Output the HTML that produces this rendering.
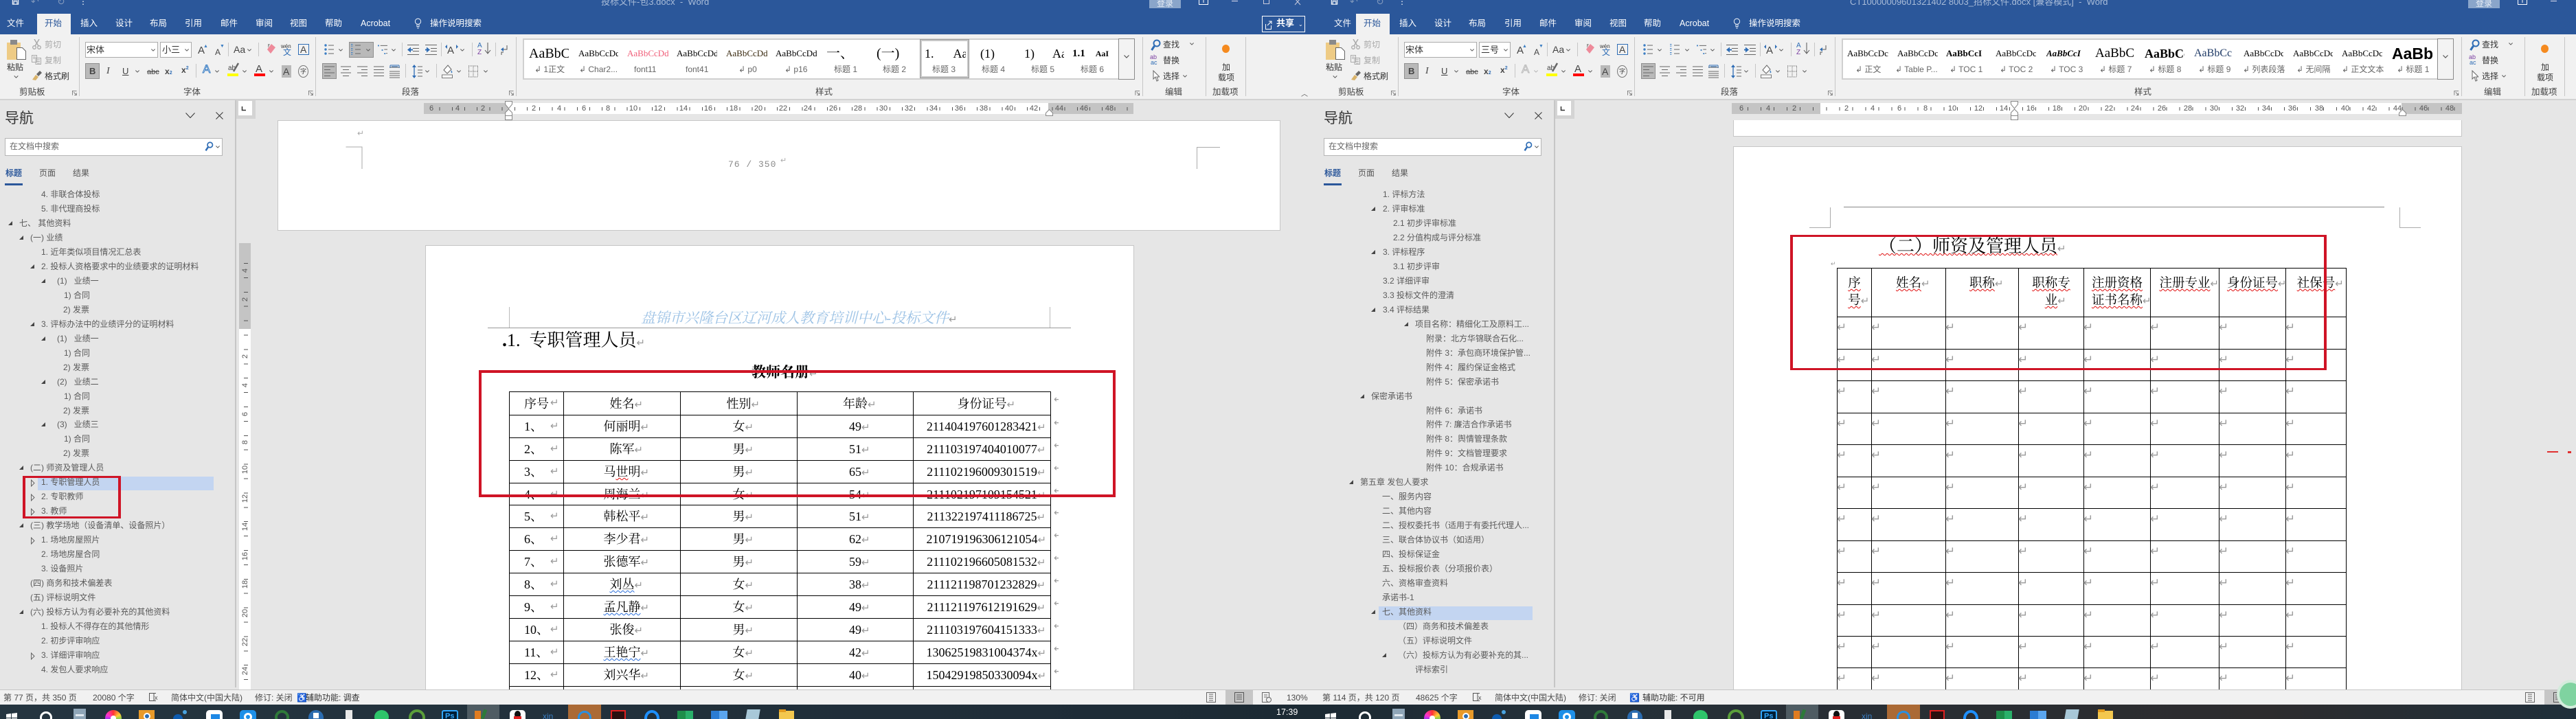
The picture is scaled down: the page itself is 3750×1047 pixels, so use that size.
<!DOCTYPE html>
<html lang="zh-CN"><head><meta charset="utf-8"><title>Word</title>
<style>
*{box-sizing:border-box}
html,body{margin:0;padding:0;width:3750px;height:1047px;overflow:hidden;background:#e6e6e6}
body{position:relative;font:12px/16px "Liberation Sans","Noto Sans CJK SC",sans-serif;color:#444}
i{position:absolute;font-style:normal;white-space:nowrap;line-height:16px}
.a,.s{position:absolute}
.s{overflow:visible}
.w{position:absolute;top:0;width:1920px;height:1047px}
.bar{position:absolute;left:0;width:3750px}
.v{position:absolute;top:54px;height:86px;width:1px;background:#c6c6c6}
.vs{position:absolute;width:1px;background:#c6c6c6}
.tab i{top:26px;color:#fff;font-size:12.5px}
.ttl{top:-5px;color:#a9bcd8;font-size:13px}
.grp{top:126px;color:#444;font-size:12.5px}
.gray{color:#a8a8a8}
.box{position:absolute;background:#fff;border:1px solid #ababab}
.on{position:absolute;background:#b9b9b9;border:1px solid #8f8f8f}
.gal{position:absolute;left:761px;top:56px;width:891px;height:60px;background:#fff;border:2px solid #d0d0d0;border-right:0}
.gb{position:absolute;left:1628px;top:56px;width:24px;height:60px;background:#f3f3f3;border:1px solid #8a8a8a}
.g{position:absolute;top:68px;height:20px;line-height:20px;overflow:hidden;white-space:nowrap;font:13px/20px "Liberation Serif","Noto Serif CJK SC",serif;color:#000}
.l{top:93px;color:#666;font-size:12px}
.rg{position:absolute;top:150px;height:16px;background:#c4c4c4}
.rw{position:absolute;top:150px;height:16px;background:#fff}
.rt{position:absolute;height:5px;top:156px}
.rl i{top:150px;font-size:11px;color:#555;width:16px;margin-left:-8px;text-align:center}
.vl i{left:347px;width:20px;text-align:center;font-size:11px;line-height:12px;height:12px;color:#555;transform:rotate(-90deg)}
.n i{color:#5a5a5a;font-size:12px}
.tf{position:absolute;width:6px;height:6px;background:#444;clip-path:polygon(100% 0,100% 100%,0 100%)}
.st i{top:1008px;color:#4a4a4a;font-size:12px}
.k{position:absolute}
.red{position:absolute;border:4px solid #cf1426;z-index:5}
table{border-collapse:collapse;table-layout:fixed;font:18px/22px "Liberation Serif","Noto Serif CJK SC",serif;color:#000}
td{border:1px solid #000;padding:0;text-align:center}
s{text-decoration:none;color:#9a9a9a;font:15px/13px "DejaVu Sans",sans-serif;display:inline-block;width:0;white-space:nowrap}
u{text-decoration:underline wavy #e01010 1px;text-underline-offset:2px}
u.b{text-decoration-color:#2a6fdb}
.c{position:relative}
.c>s:last-child{position:absolute;left:calc(100% + 5px);top:5px;font-size:14px}
.t1 td:first-child{text-align:left;padding-left:21px;position:relative}
.t1 td:first-child s{position:absolute;left:59px;top:9px}
.t2 td{vertical-align:top;text-align:left;border-color:#000;padding-top:3px}
.t2 s{font-size:17px;line-height:16px;margin-left:-1px}
.t2 tr.h td{font-size:18.5px;line-height:25px;padding-top:10px;text-align:center}
.t2 tr.h s{font-size:15px;margin:0}
</style></head><body>
<svg width="0" height="0" style="position:absolute"><defs>
<symbol id="cv" viewBox="0 0 8 5"><path d="M.5.5 4 4 7.5.5" fill="none" stroke="#555" stroke-width="1.2"/></symbol>
<symbol id="dl" viewBox="0 0 9 9"><path d="M.5 8.5V.5h8M3 3l5 5M8 4v4.500H4" fill="none" stroke="#666"/></symbol>
<symbol id="pa" viewBox="0 0 28 29"><rect y="4" width="20" height="25" fill="#eecb85"/><rect x="5" width="10" height="7" fill="#8a8a8a"/><path d="M14.500 11.500h8l5 5v12h-13z" fill="#fff" stroke="#666"/></symbol>
<symbol id="sc" viewBox="0 0 13 15"><path d="M3 0l6 10M10 0L4 10" stroke="#aaa" stroke-width="1.500" fill="none"/><circle cx="3" cy="12" r="2.300" fill="none" stroke="#aaa" stroke-width="1.300"/><circle cx="10" cy="12" r="2.300" fill="none" stroke="#aaa" stroke-width="1.300"/></symbol>
<symbol id="cp" viewBox="0 0 14 14"><path d="M.5.5h7v10h-7zM6 4.500h7.500v9H6zM2 3h4M2 5h3M8 7h4M8 9.500h4M8 12h4" fill="#f1f1f1" stroke="#aaa"/></symbol>
<symbol id="fp" viewBox="0 0 14 14"><path d="M0 13l5-7 4 3-4 5z" fill="#d9b36a"/><path d="M6 5l5-5 3 3-5 5z" fill="#666"/></symbol>
<symbol id="bl" viewBox="0 0 14 16"><circle cx="2" cy="2" r="1.700" fill="#3d7fc4"/><circle cx="2" cy="8" r="1.700" fill="#3d7fc4"/><circle cx="2" cy="14" r="1.700" fill="#3d7fc4"/><path d="M6 2h8M6 8h8M6 14h8" stroke="#666"/></symbol>
<symbol id="nm" viewBox="0 0 14 16"><path d="M0 .5h2.500M0 3h2.500M0 6.500h2.500M0 9h2.500M0 12.500h2.500M0 15h2.500" stroke="#3d7fc4"/><path d="M6 2h8M6 8h8M6 14h8" stroke="#666"/></symbol>
<symbol id="ml" viewBox="0 0 15 16"><path d="M0 2h2M6 9h2M10 14.500h2" stroke="#3d7fc4" stroke-width="2"/><path d="M4 2h11M10 8h5M13 14h2" stroke="#666"/></symbol>
<symbol id="od" viewBox="0 0 17 15"><path d="M0 .5h17M8 5.500h9M8 9.500h9M0 14.500h17" stroke="#666"/><path d="M0 7.500l5-4v8z" fill="#2f6db5"/><path d="M4 7.500h4" stroke="#2f6db5" stroke-width="2"/></symbol>
<symbol id="id" viewBox="0 0 17 15"><path d="M0 .5h17M8 5.500h9M8 9.500h9M0 14.500h17" stroke="#666"/><path d="M7 7.500l-5-4v8z" fill="#2f6db5"/><path d="M0 7.500h3" stroke="#2f6db5" stroke-width="2"/></symbol>
<symbol id="al" viewBox="0 0 15 16"><path d="M0 1h15M0 5.500h9M0 10h15M0 14.500h9" stroke="#666"/></symbol>
<symbol id="ac" viewBox="0 0 15 16"><path d="M0 1h15M3 5.500h9M0 10h15M3 14.500h9" stroke="#666"/></symbol>
<symbol id="ar" viewBox="0 0 15 16"><path d="M0 1h15M6 5.500h9M0 10h15M6 14.500h9" stroke="#666"/></symbol>
<symbol id="aj" viewBox="0 0 15 16"><path d="M0 1h15M0 5.500h15M0 10h15M0 14.500h15" stroke="#666"/></symbol>
<symbol id="ad" viewBox="0 0 15 20"><path d="M0 4h15M0 10h15M0 13h15M0 16h15M0 19h15" stroke="#666"/><path d="M1 1h13M1 1v4M14 1v4M3 3h9" stroke="#2f6db5"/></symbol>
<symbol id="ls" viewBox="0 0 15 20"><path d="M3 2v16" stroke="#2f6db5" stroke-width="1.300"/><path d="M3 0l3 4H0zM3 20l3-4H0z" fill="#2f6db5"/><path d="M8 3h7M8 8h7M8 12h7M8 17h7" stroke="#666"/></symbol>
<symbol id="shd" viewBox="0 0 17 20"><path d="M3 8l6-7 5 6-6 6z" fill="#fff" stroke="#666"/><path d="M14 8c1 2 2 3 1 4s-2-1-1-4" fill="#3d7fc4"/><rect x=".5" y="15" width="15" height="4.500" fill="#fff" stroke="#777"/></symbol>
<symbol id="bd" viewBox="0 0 14 18"><path d="M.5 1v16M7 1v16M13.500 1v16M0 1h14M0 9h14M0 17h14" stroke="#666" stroke-dasharray="1 1"/></symbol>
<symbol id="ret" viewBox="0 0 11 16"><path d="M9 1v6H3" fill="none" stroke="#555"/><path d="M0 7l4-3v6z" fill="#2f6db5"/><path d="M4 11H1v4" fill="none" stroke="#555"/></symbol>
<symbol id="zoom" viewBox="0 0 15 18"><circle cx="9" cy="6" r="4.500" fill="none" stroke="#2f6db5" stroke-width="2"/><path d="M5.500 10l-4 6" stroke="#2f6db5" stroke-width="3"/></symbol>
<symbol id="ptr" viewBox="0 0 10 17"><path d="M1 1v12l3-3 2 6 2-1-2-5h4z" fill="#fff" stroke="#666"/></symbol>
<symbol id="ht" viewBox="0 0 6 10"><path d="M.5.5 5 5 .5 9.500z" fill="none" stroke="#666"/></symbol>
<symbol id="x" viewBox="0 0 11 11"><path d="M.5.5l10 10M10.500.5l-10 10" stroke="#333" fill="none"/></symbol>
<symbol id="nv" viewBox="0 0 14 8"><path d="M.5.5 7 7.500 13.500.5" stroke="#333" fill="none"/></symbol>
<symbol id="bulb" viewBox="0 0 13 24"><circle cx="6.500" cy="7" r="5.500" fill="none" stroke="#fff" stroke-width="1.200"/><path d="M4.500 12v5h4v-5M5 20h3" stroke="#fff" stroke-width="1.200" fill="none"/></symbol>
<symbol id="sv" viewBox="0 0 13 13"><path d="M.5 -4h12v13h-12zM3 3h7v6H3zM3 -4v4h7v-4" fill="none" stroke="#fff" stroke-width="1.600"/></symbol>
<symbol id="wn" viewBox="0 0 16 16"><path d="M0 2l7-1v6H0zM8 1l8-1v7H8zM0 8h7v6l-7-1zM8 8h8v8l-8-1z" fill="#fff"/></symbol>
</defs></svg>

<!-- chrome bars -->
<div class="bar" style="top:0;height:50px;background:#2b579a"></div>
<div class="bar" style="top:50px;height:94px;background:#f1f1f1"></div>
<div class="bar" style="top:144px;height:2px;background:#d2d2d2"></div>
<div class="bar" style="top:1004px;height:22px;background:#f1f1f1;border-top:1px solid #c6c6c6"></div>
<div class="bar" style="top:1026px;height:21px;background:linear-gradient(90deg,#253540,#1f2d38 40%,#1c2a33 51%,#243039 60%,#2d2c2e 88%,#1f2f3a)"></div>

<!-- LEFT WINDOW -->
<div class="w" style="left:0">
<svg class="s" style="left:16px;top:0" width="13" height="9"><use href="#sv"/></svg>
<i style="left:45px;top:-6px;color:#7f97bc;font-size:14px">↶</i><i style="left:83px;top:-6px;color:#7f97bc;font-size:14px">↻</i><i style="left:115px;top:-6px;color:#fff;font-size:12px">⋮</i>
<i class="ttl" style="left:875px">投标文件-包3.docx&nbsp; -&nbsp; Word</i>
<div class="a" style="left:1673px;top:0;width:46px;height:12px;background:#8aa5ca"></div><i style="left:1684px;top:-3px;color:#e8eef6">登录</i>
<svg class="s" style="left:1745px;top:0" width="14" height="8"><path d="M.5 0v6.500h13V0M7 0v4" fill="none" stroke="#fff"/></svg>
<div class="a" style="left:1793px;top:1px;width:9px;height:1px;background:#dde"></div><div class="a" style="left:1839px;top:0;width:9px;height:6px;border:1px solid #ccd;border-top:0"></div>
<svg class="s" style="left:1885px;top:0" width="9" height="7"><path d="M0 -2l8 9M8 -2l-8 9" stroke="#ccd" fill="none"/></svg>
<div class="a" style="left:1837px;top:23px;width:63px;height:24px;border:1px solid #fff"></div>
<svg class="s" style="left:1842px;top:29px" width="11" height="14"><path d="M.5 6v7.500h8V8M3 8l6-6M5 2h4v4" fill="none" stroke="#fff"/></svg>
<i style="left:1858px;top:26px;color:#fff;font-weight:bold;font-size:13px">共享</i><i style="left:1890px;top:28px;color:#fff;font-size:8px">⌄</i>
<div class="a" style="left:54px;top:20px;width:49px;height:30px;background:#f1f1f1"></div>
<div class="tab">
<i style="left:10px">文件</i><i style="left:65px;color:#2b579a">开始</i><i style="left:117px">插入</i><i style="left:168px">设计</i><i style="left:218px">布局</i><i style="left:269px">引用</i><i style="left:321px">邮件</i><i style="left:372px">审阅</i><i style="left:422px">视图</i><i style="left:473px">帮助</i><i style="left:525px">Acrobat</i><i style="left:626px">操作说明搜索</i></div>
<svg class="s" style="left:602px;top:26px" width="13" height="18"><use href="#bulb"/></svg>
<div class="v" style="left:115px"></div><div class="v" style="left:459px"></div><div class="v" style="left:751px"></div><div class="v" style="left:1663px"></div><div class="v" style="left:1755px"></div><div class="v" style="left:1813px"></div>
<svg class="s" style="left:10px;top:58px" width="28" height="29"><use href="#pa"/></svg>
<i style="left:10px;top:90px;color:#333">粘贴</i><svg class="s" style="left:20px;top:110px" width="7" height="4"><use href="#cv"/></svg>
<svg class="s" style="left:47px;top:57px" width="13" height="15"><use href="#sc"/></svg><i class="gray" style="left:65px;top:57px">剪切</i>
<svg class="s" style="left:46px;top:80px" width="14" height="14"><use href="#cp"/></svg><i class="gray" style="left:65px;top:80px">复制</i>
<svg class="s" style="left:47px;top:103px" width="14" height="14"><use href="#fp"/></svg><i style="left:65px;top:103px;color:#333">格式刷</i>
<i class="grp" style="left:28px">剪贴板</i><svg class="s" style="left:104px;top:132px" width="9" height="7"><use href="#dl"/></svg>
<div class="box" style="left:124px;top:61px;width:106px;height:23px"></div><i style="left:126px;top:65px;color:#333;font-size:13px">宋体</i><svg class="s" style="left:220px;top:71px" width="6" height="4"><use href="#cv"/></svg>
<div class="box" style="left:233px;top:61px;width:46px;height:23px"></div><i style="left:236px;top:65px;color:#333;font-size:13px">小三</i><svg class="s" style="left:269px;top:71px" width="6" height="4"><use href="#cv"/></svg>
<i style="left:288px;top:66px;font-size:15px">A</i><i style="left:296px;top:60px;font-size:7px;color:#3d7fc4">▲</i><i style="left:313px;top:68px;font-size:12px">A</i><i style="left:320px;top:60px;font-size:7px;color:#3d7fc4">▼</i>
<div class="vs" style="left:332px;top:62px;height:20px"></div><i style="left:340px;top:64px;font-size:14px">Aa</i><svg class="s" style="left:360px;top:71px" width="6" height="4"><use href="#cv"/></svg><div class="vs" style="left:376px;top:62px;height:20px"></div>
<svg class="s" style="left:386px;top:63px" width="16" height="17"><path d="M3 9l6-8 6 5-7 9z" fill="#ee8a9a"/><path d="M4 1l3 0-3 6z" fill="#999"/></svg>
<i style="left:409px;top:60px;font-size:8px;color:#333">wén</i><i style="left:412px;top:68px;font-size:12px;color:#2f6db5">文</i>
<div class="a" style="left:434px;top:64px;width:16px;height:16px;border:1px solid #2f6db5"></div><i style="left:437px;top:64px;font-size:14px">A</i>
<div class="on" style="left:124px;top:92px;width:21px;height:23px"></div><i style="left:130px;top:96px;font-weight:bold;font-size:13px">B</i><i style="left:155px;top:96px;font-style:italic;font-family:'Liberation Serif';font-size:14px">I</i><i style="left:178px;top:96px;text-decoration:underline;font-size:13px">U</i><svg class="s" style="left:197px;top:102px" width="6" height="4"><use href="#cv"/></svg>
<i style="left:214px;top:97px;text-decoration:line-through;font-size:11px">abc</i><i style="left:240px;top:96px;font-weight:bold;font-size:12px">x<span style="font-size:7px;color:#2f6db5">2</span></i><i style="left:264px;top:94px;font-weight:bold;font-size:12px">x<sup style="font-size:7px;color:#2f6db5;line-height:0">2</sup></i><div class="vs" style="left:285px;top:93px;height:20px"></div>
<i style="left:295px;top:93px;font-size:17px;color:#fff;-webkit-text-stroke:1px #3d7fc4">A</i><svg class="s" style="left:313px;top:102px" width="6" height="4"><use href="#cv"/></svg>
<i style="left:332px;top:92px;font-size:10px">ab</i><svg class="s" style="left:338px;top:92px" width="10" height="14"><path d="M9 0L2 12" stroke="#666" stroke-width="2.500"/></svg><div class="a" style="left:331px;top:107px;width:16px;height:4px;background:#ffff00"></div><svg class="s" style="left:353px;top:102px" width="6" height="4"><use href="#cv"/></svg>
<i style="left:372px;top:93px;font-size:15px">A</i><div class="a" style="left:370px;top:107px;width:16px;height:4px;background:#f00"></div><svg class="s" style="left:392px;top:102px" width="6" height="4"><use href="#cv"/></svg>
<div class="a" style="left:410px;top:95px;width:14px;height:18px;background:#b9b9b9"></div><i style="left:412px;top:96px;font-size:14px">A</i>
<div class="a" style="left:434px;top:95px;width:15px;height:18px;border:1px solid #777;border-radius:50%"></div><i style="left:437px;top:96px;font-size:9px">字</i>
<i class="grp" style="left:267px">字体</i><svg class="s" style="left:448px;top:132px" width="9" height="7"><use href="#dl"/></svg>
<svg class="s" style="left:472px;top:64px" width="14" height="16"><use href="#bl"/></svg><svg class="s" style="left:493px;top:71px" width="6" height="4"><use href="#cv"/></svg>
<div class="on" style="left:508px;top:61px;width:36px;height:23px"></div><svg class="s" style="left:511px;top:64px" width="14" height="16"><use href="#nm"/></svg><svg class="s" style="left:533px;top:71px" width="6" height="4"><use href="#cv"/></svg>
<svg class="s" style="left:550px;top:64px" width="14" height="16"><use href="#ml"/></svg><svg class="s" style="left:570px;top:71px" width="6" height="4"><use href="#cv"/></svg><div class="vs" style="left:585px;top:62px;height:20px"></div>
<svg class="s" style="left:593px;top:65px" width="17" height="15"><use href="#od"/></svg><svg class="s" style="left:619px;top:65px" width="17" height="15"><use href="#id"/></svg><div class="vs" style="left:642px;top:62px;height:20px"></div>
<i style="left:651px;top:66px;font-size:15px">A</i><svg class="s" style="left:648px;top:64px" width="19" height="7"><path d="M0 4l3-3v6zM19 4l-3-3v6z" fill="#2f6db5"/></svg><svg class="s" style="left:670px;top:71px" width="6" height="4"><use href="#cv"/></svg><div class="vs" style="left:687px;top:62px;height:20px"></div>
<i style="left:695px;top:61px;font-size:10px;color:#2f6db5;line-height:11px">A</i><i style="left:695px;top:71px;font-size:10px;color:#7a3ea0;line-height:11px">Z</i><svg class="s" style="left:704px;top:62px" width="12" height="18"><path d="M6 0v15M2 11l4 5 4-5" stroke="#555" fill="none"/></svg><div class="vs" style="left:721px;top:62px;height:20px"></div>
<svg class="s" style="left:729px;top:65px" width="11" height="16"><use href="#ret"/></svg>
<div class="on" style="left:469px;top:92px;width:21px;height:23px"></div><svg class="s" style="left:472px;top:96px" width="15" height="16"><use href="#al"/></svg><svg class="s" style="left:496px;top:96px" width="15" height="16"><use href="#ac"/></svg><svg class="s" style="left:520px;top:96px" width="15" height="16"><use href="#ar"/></svg><svg class="s" style="left:544px;top:96px" width="15" height="16"><use href="#aj"/></svg><svg class="s" style="left:567px;top:94px" width="15" height="20"><use href="#ad"/></svg><div class="vs" style="left:590px;top:93px;height:20px"></div>
<svg class="s" style="left:600px;top:94px" width="15" height="20"><use href="#ls"/></svg><svg class="s" style="left:619px;top:102px" width="6" height="4"><use href="#cv"/></svg><div class="vs" style="left:635px;top:93px;height:20px"></div>
<svg class="s" style="left:643px;top:94px" width="17" height="20"><use href="#shd"/></svg><svg class="s" style="left:665px;top:102px" width="6" height="4"><use href="#cv"/></svg><svg class="s" style="left:682px;top:95px" width="14" height="18"><use href="#bd"/></svg><svg class="s" style="left:704px;top:102px" width="6" height="4"><use href="#cv"/></svg>
<i class="grp" style="left:585px">段落</i><svg class="s" style="left:740px;top:132px" width="9" height="7"><use href="#dl"/></svg>
<div class="gal"></div><div class="gb"></div><svg class="s" style="left:1636px;top:80px" width="8" height="5"><use href="#cv"/></svg>
<div class="a" style="left:1339px;top:57px;width:72px;height:57px;border:3px solid #c8c8c8;outline:1px solid #999;outline-offset:-1px;background:#fff"></div>
<div class="g" style="left:770px;width:58px;font-size:20px;top:64px;height:28px;line-height:28px">AaBbC</div>
<div class="g" style="left:842px;width:58px">AaBbCcDdI</div>
<div class="g" style="left:913px;width:60px;color:#f0607a">AaBbCcDdI</div>
<div class="g" style="left:985px;width:59px">AaBbCcDdI</div>
<div class="g" style="left:1057px;width:60px;color:#3a2a10">AaBbCcDd</div>
<div class="g" style="left:1129px;width:60px">AaBbCcDd</div>
<div class="g" style="left:1203px;width:34px;font-size:20px;top:64px;height:28px;line-height:28px">一、</div>
<div class="g" style="left:1276px;width:42px;font-size:20px;top:64px;height:28px;line-height:28px">(一)</div>
<div class="g" style="left:1346px;width:60px;font-size:18px;top:64px;height:28px;line-height:28px">1.<span style="margin-left:28px">Aa</span></div>
<div class="g" style="left:1427px;width:34px;font-size:18px;top:64px;height:28px;line-height:28px">(1)</div>
<div class="g" style="left:1491px;width:58px;font-size:18px;top:64px;height:28px;line-height:28px">1)<span style="margin-left:26px">Aa</span></div>
<div class="g" style="left:1561px;width:59px;font-size:15px;font-weight:bold;top:64px;height:28px;line-height:28px">1.1<span style="margin-left:15px;font-size:12px">AaI</span></div>
<i class="l" style="left:778px">↲ 1正文</i><i class="l" style="left:843px">↲ Char2...</i><i class="l" style="left:923px">font11</i><i class="l" style="left:998px">font41</i><i class="l" style="left:1075px">↲ p0</i><i class="l" style="left:1142px">↲ p16</i><i class="l" style="left:1214px">标题 1</i><i class="l" style="left:1285px">标题 2</i><i class="l" style="left:1357px">标题 3</i><i class="l" style="left:1429px">标题 4</i><i class="l" style="left:1501px">标题 5</i><i class="l" style="left:1573px">标题 6</i>
<i class="grp" style="left:1187px">样式</i><svg class="s" style="left:1652px;top:132px" width="8" height="7"><use href="#dl"/></svg>
<svg class="s" style="left:1675px;top:57px" width="15" height="18"><use href="#zoom"/></svg><i style="left:1693px;top:57px;color:#333">查找</i><svg class="s" style="left:1732px;top:62px" width="6" height="4"><use href="#cv"/></svg>
<i style="left:1674px;top:79px;font-size:9px;line-height:9px;color:#7a3ea0">ab</i><i style="left:1675px;top:87px;font-size:9px;line-height:9px;color:#2f6db5">ac</i><i style="left:1693px;top:80px;color:#333">替换</i>
<svg class="s" style="left:1678px;top:102px" width="10" height="17"><use href="#ptr"/></svg><i style="left:1693px;top:103px;color:#333">选择</i><svg class="s" style="left:1722px;top:109px" width="6" height="4"><use href="#cv"/></svg>
<i class="grp" style="left:1696px">编辑</i>
<div class="a" style="left:1779px;top:65px;width:11px;height:12px;border-radius:50%;background:#f58a1f"></div><i style="left:1779px;top:90px;color:#333">加</i><i style="left:1773px;top:105px;color:#333">载项</i><i class="grp" style="left:1765px">加载项</i>
<i style="left:1894px;top:130px;font-size:10px;color:#555">︿</i>

<!-- rulers -->
<div class="a" style="left:344px;top:146px;width:28px;height:27px;background:#d4d4d4"></div><div class="a" style="left:347px;top:147px;width:20px;height:21px;background:#fff"></div><svg class="s" style="left:352px;top:155px" width="6" height="6"><path d="M.5 0v5.500H6" fill="none" stroke="#333" stroke-width="1.500"/></svg>
<div class="rg" style="left:617px;width:123px"></div><div class="rw" style="left:740px;width:786px"></div><div class="rg" style="left:1526px;width:124px"></div>
<div class="rt" style="left:631.400px;width:1019px;background:repeating-linear-gradient(90deg,transparent 0 8.600px,#555 8.600px 9.600px,transparent 9.600px 26.800px,#555 26.800px 27.800px,transparent 27.800px 36.400px)"></div>
<div class="rl"><i style="left:628px">6</i><i style="left:666px">4</i><i style="left:703px">2</i><i style="left:777px">2</i><i style="left:814px">4</i><i style="left:850px">6</i><i style="left:885px">8</i><i style="left:922px">10</i><i style="left:958px">12</i><i style="left:995px">14</i><i style="left:1031px">16</i><i style="left:1068px">18</i><i style="left:1104px">20</i><i style="left:1140px">22</i><i style="left:1176px">24</i><i style="left:1213px">26</i><i style="left:1249px">28</i><i style="left:1286px">30</i><i style="left:1323px">32</i><i style="left:1359px">34</i><i style="left:1396px">36</i><i style="left:1432px">38</i><i style="left:1469px">40</i><i style="left:1505px">42</i><i style="left:1542px">44</i><i style="left:1578px">46</i><i style="left:1615px">48</i></div>
<svg class="s" style="left:735px;top:147px" width="11" height="28"><path d="M.5.5h10V5L5.500 11 .5 5zM.5 21.500V17L5.500 12l5 5v4.500zM.5 21.500h10v6H.5z" fill="#fff" stroke="#888"/></svg>
<svg class="s" style="left:1522px;top:159px" width="11" height="10"><path d="M5.500.5l5 5v4H.5v-4z" fill="#fff" stroke="#888"/></svg>
<div class="rg" style="left:348px;top:354px;width:17px;height:125px"></div><div class="rw" style="left:348px;top:479px;width:17px;height:525px"></div>
<div class="a" style="left:355px;top:383px;width:6px;height:617px;background:repeating-linear-gradient(180deg,#555 0 1px,transparent 1px 20.900px)"></div>
<div class="vl"><i style="top:388px">4</i><i style="top:430px">2</i><i style="top:513px">2</i><i style="top:555px">4</i><i style="top:597px">6</i><i style="top:638px">8</i><i style="top:678px">10</i><i style="top:720px">12</i><i style="top:761px">14</i><i style="top:804px">16</i><i style="top:845px">18</i><i style="top:887px">20</i><i style="top:929px">22</i><i style="top:971px">24</i></div>

<!-- nav -->
<div class="a" style="left:342px;top:146px;width:2px;height:855px;background:#c6c6c6"></div>
<i style="left:7px;top:160px;font-size:21px;line-height:26px;color:#333">导航</i>
<svg class="s" style="left:270px;top:164px" width="14" height="8"><use href="#nv"/></svg><svg class="s" style="left:314px;top:163px" width="11" height="11"><use href="#x"/></svg>
<div class="box" style="left:7px;top:201px;width:317px;height:26px;border-color:#b5b5b5"></div><i style="left:14px;top:205px;color:#666">在文档中搜索</i>
<svg class="s" style="left:297px;top:206px" width="15" height="15"><use href="#zoom"/></svg><svg class="s" style="left:314px;top:212px" width="6" height="4"><use href="#cv"/></svg>
<i style="left:8px;top:244px;color:#2b579a;font-weight:bold">标题</i><i style="left:57px;top:244px;color:#555">页面</i><i style="left:106px;top:244px;color:#555">结果</i><div class="a" style="left:7px;top:267px;width:26px;height:3px;background:#2b579a"></div>
<div class="a" style="left:55px;top:694px;width:256px;height:20px;background:#c3d5f1"></div>
<div class="n">
<i style="left:60px;top:275px">4. 非联合体投标</i><i style="left:60px;top:296px">5. 非代理商投标</i>
<b class="tf" style="left:12px;top:322px"></b><i style="left:28px;top:317px">七、&nbsp;其他资料</i>
<b class="tf" style="left:28px;top:343px"></b><i style="left:44px;top:338px">(一) 业绩</i>
<i style="left:60px;top:359px">1. 近年类似项目情况汇总表</i>
<b class="tf" style="left:44px;top:385px"></b><i style="left:60px;top:380px">2. 投标人资格要求中的业绩要求的证明材料</i>
<b class="tf" style="left:60px;top:406px"></b><i style="left:83px;top:401px">(1)&nbsp;&nbsp; 业绩一</i>
<i style="left:93px;top:422px">1) 合同</i><i style="left:92px;top:443px">2) 发票</i>
<b class="tf" style="left:44px;top:469px"></b><i style="left:60px;top:464px">3. 评标办法中的业绩评分的证明材料</i>
<b class="tf" style="left:60px;top:490px"></b><i style="left:83px;top:485px">(1)&nbsp;&nbsp; 业绩一</i>
<i style="left:93px;top:506px">1) 合同</i><i style="left:92px;top:527px">2) 发票</i>
<b class="tf" style="left:60px;top:553px"></b><i style="left:83px;top:548px">(2)&nbsp;&nbsp; 业绩二</i>
<i style="left:93px;top:569px">1) 合同</i><i style="left:92px;top:590px">2) 发票</i>
<b class="tf" style="left:60px;top:615px"></b><i style="left:83px;top:610px">(3)&nbsp;&nbsp; 业绩三</i>
<i style="left:93px;top:631px">1) 合同</i><i style="left:92px;top:652px">2) 发票</i>
<b class="tf" style="left:28px;top:678px"></b><i style="left:44px;top:673px">(二) 师资及管理人员</i>
<svg class="s" style="left:45px;top:698px" width="6" height="11"><use href="#ht"/></svg><i style="left:60px;top:694px">1. 专职管理人员</i>
<svg class="s" style="left:45px;top:719px" width="6" height="11"><use href="#ht"/></svg><i style="left:60px;top:715px">2. 专职教师</i>
<svg class="s" style="left:45px;top:740px" width="6" height="11"><use href="#ht"/></svg><i style="left:60px;top:736px">3. 教师</i>
<b class="tf" style="left:28px;top:762px"></b><i style="left:44px;top:757px">(三) 教学场地（设备清单、设备照片）</i>
<svg class="s" style="left:45px;top:782px" width="6" height="11"><use href="#ht"/></svg><i style="left:60px;top:778px">1. 场地房屋照片</i>
<i style="left:60px;top:799px">2. 场地房屋合同</i><i style="left:60px;top:820px">3. 设备照片</i>
<i style="left:44px;top:841px">(四) 商务和技术偏差表</i><i style="left:44px;top:862px">(五) 评标说明文件</i>
<b class="tf" style="left:28px;top:888px"></b><i style="left:44px;top:883px">(六) 投标方认为有必要补充的其他资料</i>
<i style="left:60px;top:904px">1. 投标人不得存在的其他情形</i><i style="left:60px;top:925px">2. 初步评审响应</i>
<svg class="s" style="left:45px;top:950px" width="6" height="11"><use href="#ht"/></svg><i style="left:60px;top:946px">3. 详细评审响应</i>
<i style="left:60px;top:967px">4. 发包人要求响应</i>
</div>
<div class="red" style="left:33px;top:693px;width:143px;height:62px;border-width:3px 4px"></div>

<!-- pages -->
<div class="a" style="left:404px;top:175px;width:1460px;height:161px;background:#fff;border:1px solid #c6c6c6"></div>
<i style="left:1060px;top:232px;color:#8a8a8a;font-size:13px;letter-spacing:1px;font-family:'Liberation Mono',monospace">76 / 350</i><i style="left:1136px;top:226px;color:#aaa;font-size:11px">↵</i>
<i style="left:520px;top:186px;color:#aaa;font-size:12px">↵</i>
<svg class="s" style="left:503px;top:214px" width="24" height="32"><path d="M.5 0H24V32" fill="none" stroke="#aaa"/></svg>
<svg class="s" style="left:1742px;top:214px" width="34" height="32"><path d="M.5 32V.5H34" fill="none" stroke="#aaa"/></svg>
<div class="a" style="left:619px;top:357px;width:1032px;height:647px;background:#fff;border-left:1px solid #c6c6c6;border-top:1px solid #c6c6c6;border-right:1px solid #c6c6c6"></div>
<div class="a" style="left:741px;top:447px;width:1px;height:30px;background:#bbb"></div><div class="a" style="left:1528px;top:447px;width:1px;height:30px;background:#bbb"></div><div class="a" style="left:710px;top:477px;width:849px;height:1px;background:#999"></div>
<i style="left:933px;top:451px;font:italic 21px/24px 'Liberation Serif','Noto Serif CJK SC',serif;color:#9cc2e5">盘锦市兴隆台区辽河成人教育培训中心-投标文件<s style="font-style:normal">↵</s></i>
<i style="left:731px;top:480px;font:26px/32px 'Liberation Serif','Noto Serif CJK SC',serif;color:#000"><b style="font-size:28px">.</b>1.&nbsp; 专职管理人员<s>↵</s></i>
<i style="left:1094px;top:530px;font:bold 21px/24px 'Liberation Serif','Noto Serif CJK SC',serif;color:#000">教师名册<s>↵</s></i>
<div class="a" style="left:741px;top:570px;width:800px;height:434px;overflow:hidden">
<table class="t1" style="width:788px"><colgroup><col style="width:79px"><col style="width:170px"><col style="width:170px"><col style="width:169px"><col style="width:200px"></colgroup>
<tr style="height:34px"><td>序号<s>↵</s><td>姓名<s>↵</s><td>性别<s>↵</s><td>年龄<s>↵</s><td class="c">身份证号<s>↵</s><s>↵</s>
<tr style="height:33px"><td>1、<s>↵</s><td>何丽明<s>↵</s><td>女<s>↵</s><td>49<s>↵</s><td class="c">211404197601283421<s>↵</s><s>↵</s>
<tr style="height:33px"><td>2、<s>↵</s><td>陈军<s>↵</s><td>男<s>↵</s><td>51<s>↵</s><td class="c">211103197404010077<s>↵</s><s>↵</s>
<tr style="height:33px"><td>3、<s>↵</s><td>马<u>世</u>明<s>↵</s><td>男<s>↵</s><td>65<s>↵</s><td class="c">211102196009301519<s>↵</s><s>↵</s>
<tr style="height:32px"><td>4、<s>↵</s><td>周海兰<s>↵</s><td>女<s>↵</s><td>54<s>↵</s><td class="c">211102197109154521<s>↵</s><s>↵</s>
<tr style="height:33px"><td>5、<s>↵</s><td>韩松平<s>↵</s><td>男<s>↵</s><td>51<s>↵</s><td class="c">211322197411186725<s>↵</s><s>↵</s>
<tr style="height:33px"><td>6、<s>↵</s><td>李少君<s>↵</s><td>男<s>↵</s><td>62<s>↵</s><td class="c">210719196306121054<s>↵</s><s>↵</s>
<tr style="height:33px"><td>7、<s>↵</s><td>张德军<s>↵</s><td>男<s>↵</s><td>59<s>↵</s><td class="c">211102196605081532<s>↵</s><s>↵</s>
<tr style="height:33px"><td>8、<s>↵</s><td><u class="b">刘丛</u><s>↵</s><td>女<s>↵</s><td>38<s>↵</s><td class="c">211121198701232829<s>↵</s><s>↵</s>
<tr style="height:33px"><td>9、<s>↵</s><td><u class="b">孟凡静</u><s>↵</s><td>女<s>↵</s><td>49<s>↵</s><td class="c">211121197612191629<s>↵</s><s>↵</s>
<tr style="height:33px"><td>10、<s>↵</s><td>张俊<s>↵</s><td>男<s>↵</s><td>49<s>↵</s><td class="c">211103197604151333<s>↵</s><s>↵</s>
<tr style="height:33px"><td>11、<s>↵</s><td><u class="b">王艳宁</u><s>↵</s><td>女<s>↵</s><td>42<s>↵</s><td class="c">13062519831004374x<s>↵</s><s>↵</s>
<tr style="height:33px"><td>12、<s>↵</s><td>刘兴华<s>↵</s><td>女<s>↵</s><td>40<s>↵</s><td class="c">15042919850330094x<s>↵</s><s>↵</s>
<tr style="height:33px"><td><td><td><td><td>
</table></div>
<div class="red" style="left:697px;top:539px;width:927px;height:185px;border-width:4px"></div>

<!-- status -->
<div class="st"><i style="left:5px">第 77 页，共 350 页</i><i style="left:135px">20080 个字</i><svg class="s" style="left:217px;top:1009px" width="15" height="13"><path d="M.5.500H7v11H.5zM7 .5h3M7 11.500h3" fill="none" stroke="#555"/></svg><i style="left:225px;top:1008px;font-size:9px">x</i><i style="left:249px">简体中文(中国大陆)</i><i style="left:371px">修订: 关闭</i><i style="left:432px;color:#555">♿</i><i style="left:445px;color:#333">辅助功能: 调查</i>
<svg class="s" style="left:1756px;top:1008px" width="14" height="15"><path d="M.5.500h13v14H.5zM4 3h6M4 6h6M4 9h6M4 12h6" fill="none" stroke="#666"/></svg>
<div class="a" style="left:1784px;top:1005px;width:40px;height:21px;background:#c6c6c6"></div>
<svg class="s" style="left:1797px;top:1008px" width="14" height="15"><path d="M.5.500h13v14H.5zM3 4h8M3 7h8M3 10h8" fill="none" stroke="#555"/></svg>
<svg class="s" style="left:1837px;top:1008px" width="14" height="15"><path d="M.5.500h10v14H.5zM3 4h5M3 7h5" fill="none" stroke="#666"/><circle cx="10" cy="11" r="3.500" fill="#eee" stroke="#666"/></svg>
<i style="left:1873px">130%</i></div>
</div>

<!-- RIGHT WINDOW -->
<div class="w" style="left:1920px">
<svg class="s" style="left:16px;top:0" width="13" height="9"><use href="#sv"/></svg>
<i style="left:45px;top:-6px;color:#7f97bc;font-size:14px">↶</i><i style="left:83px;top:-6px;color:#7f97bc;font-size:14px">↻</i><i style="left:115px;top:-6px;color:#fff;font-size:12px">⋮</i>
<i class="ttl" style="left:773px">CT10000009601321402 8003_招标文件.docx [兼容模式]&nbsp; -&nbsp; Word</i>
<div class="a" style="left:1673px;top:0;width:46px;height:12px;background:#8aa5ca"></div><i style="left:1684px;top:-3px;color:#e8eef6">登录</i>
<svg class="s" style="left:1745px;top:0" width="14" height="8"><path d="M.5 0v6.500h13V0M7 0v4" fill="none" stroke="#fff"/></svg>
<div class="a" style="left:1793px;top:1px;width:9px;height:1px;background:#dde"></div>
<div class="a" style="left:54px;top:20px;width:49px;height:30px;background:#f1f1f1"></div>
<div class="tab">
<i style="left:22px">文件</i><i style="left:65px;color:#2b579a">开始</i><i style="left:117px">插入</i><i style="left:168px">设计</i><i style="left:218px">布局</i><i style="left:270px">引用</i><i style="left:321px">邮件</i><i style="left:372px">审阅</i><i style="left:423px">视图</i><i style="left:473px">帮助</i><i style="left:525px">Acrobat</i><i style="left:626px">操作说明搜索</i></div>
<svg class="s" style="left:602px;top:26px" width="13" height="18"><use href="#bulb"/></svg>
<div class="v" style="left:115px"></div><div class="v" style="left:459px"></div><div class="v" style="left:751px"></div><div class="v" style="left:1663px"></div><div class="v" style="left:1755px"></div><div class="v" style="left:1813px"></div>
<svg class="s" style="left:10px;top:58px" width="28" height="29"><use href="#pa"/></svg>
<i style="left:10px;top:90px;color:#333">粘贴</i><svg class="s" style="left:20px;top:110px" width="7" height="4"><use href="#cv"/></svg>
<svg class="s" style="left:47px;top:57px" width="13" height="15"><use href="#sc"/></svg><i class="gray" style="left:65px;top:57px">剪切</i>
<svg class="s" style="left:46px;top:80px" width="14" height="14"><use href="#cp"/></svg><i class="gray" style="left:65px;top:80px">复制</i>
<svg class="s" style="left:47px;top:103px" width="14" height="14"><use href="#fp"/></svg><i style="left:65px;top:103px;color:#333">格式刷</i>
<i class="grp" style="left:28px">剪贴板</i><svg class="s" style="left:104px;top:132px" width="9" height="7"><use href="#dl"/></svg>
<div class="box" style="left:124px;top:61px;width:106px;height:23px"></div><i style="left:126px;top:65px;color:#333;font-size:13px">宋体</i><svg class="s" style="left:220px;top:71px" width="6" height="4"><use href="#cv"/></svg>
<div class="box" style="left:233px;top:61px;width:46px;height:23px"></div><i style="left:236px;top:65px;color:#333;font-size:13px">三号</i><svg class="s" style="left:269px;top:71px" width="6" height="4"><use href="#cv"/></svg>
<i style="left:288px;top:66px;font-size:15px">A</i><i style="left:296px;top:60px;font-size:7px;color:#3d7fc4">▲</i><i style="left:313px;top:68px;font-size:12px">A</i><i style="left:320px;top:60px;font-size:7px;color:#3d7fc4">▼</i>
<div class="vs" style="left:332px;top:62px;height:20px"></div><i style="left:340px;top:64px;font-size:14px">Aa</i><svg class="s" style="left:360px;top:71px" width="6" height="4"><use href="#cv"/></svg><div class="vs" style="left:376px;top:62px;height:20px"></div>
<svg class="s" style="left:386px;top:63px" width="16" height="17"><path d="M3 9l6-8 6 5-7 9z" fill="#ee8a9a"/><path d="M4 1l3 0-3 6z" fill="#999"/></svg>
<i style="left:409px;top:60px;font-size:8px;color:#333">wén</i><i style="left:412px;top:68px;font-size:12px;color:#2f6db5">文</i>
<div class="a" style="left:434px;top:64px;width:16px;height:16px;border:1px solid #2f6db5"></div><i style="left:437px;top:64px;font-size:14px">A</i>
<div class="on" style="left:124px;top:92px;width:21px;height:23px"></div><i style="left:130px;top:96px;font-weight:bold;font-size:13px">B</i><i style="left:155px;top:96px;font-style:italic;font-family:'Liberation Serif';font-size:14px">I</i><i style="left:178px;top:96px;text-decoration:underline;font-size:13px">U</i><svg class="s" style="left:197px;top:102px" width="6" height="4"><use href="#cv"/></svg>
<i style="left:214px;top:97px;text-decoration:line-through;font-size:11px">abc</i><i style="left:240px;top:96px;font-weight:bold;font-size:12px">x<span style="font-size:7px;color:#2f6db5">2</span></i><i style="left:264px;top:94px;font-weight:bold;font-size:12px">x<sup style="font-size:7px;color:#2f6db5;line-height:0">2</sup></i><div class="vs" style="left:285px;top:93px;height:20px"></div>
<i style="left:295px;top:93px;font-size:17px;color:#eee;-webkit-text-stroke:1px #bbb">A</i><svg class="s" style="left:313px;top:102px;opacity:.4" width="6" height="4"><use href="#cv"/></svg>
<i style="left:332px;top:92px;font-size:10px">ab</i><svg class="s" style="left:338px;top:92px" width="10" height="14"><path d="M9 0L2 12" stroke="#666" stroke-width="2.500"/></svg><div class="a" style="left:331px;top:107px;width:16px;height:4px;background:#ffff00"></div><svg class="s" style="left:353px;top:102px" width="6" height="4"><use href="#cv"/></svg>
<i style="left:372px;top:93px;font-size:15px">A</i><div class="a" style="left:370px;top:107px;width:16px;height:4px;background:#f00"></div><svg class="s" style="left:392px;top:102px" width="6" height="4"><use href="#cv"/></svg>
<div class="a" style="left:410px;top:95px;width:14px;height:18px;background:#b9b9b9"></div><i style="left:412px;top:96px;font-size:14px">A</i>
<div class="a" style="left:434px;top:95px;width:15px;height:18px;border:1px solid #777;border-radius:50%"></div><i style="left:437px;top:96px;font-size:9px">字</i>
<i class="grp" style="left:267px">字体</i><svg class="s" style="left:448px;top:132px" width="9" height="7"><use href="#dl"/></svg>
<svg class="s" style="left:472px;top:64px" width="14" height="16"><use href="#bl"/></svg><svg class="s" style="left:493px;top:71px" width="6" height="4"><use href="#cv"/></svg>
<svg class="s" style="left:511px;top:64px" width="14" height="16"><use href="#nm"/></svg><svg class="s" style="left:533px;top:71px" width="6" height="4"><use href="#cv"/></svg>
<svg class="s" style="left:550px;top:64px" width="14" height="16"><use href="#ml"/></svg><svg class="s" style="left:570px;top:71px" width="6" height="4"><use href="#cv"/></svg><div class="vs" style="left:585px;top:62px;height:20px"></div>
<svg class="s" style="left:593px;top:65px" width="17" height="15"><use href="#od"/></svg><svg class="s" style="left:619px;top:65px" width="17" height="15"><use href="#id"/></svg><div class="vs" style="left:642px;top:62px;height:20px"></div>
<i style="left:651px;top:66px;font-size:15px">A</i><svg class="s" style="left:648px;top:64px" width="19" height="7"><path d="M0 4l3-3v6zM19 4l-3-3v6z" fill="#2f6db5"/></svg><svg class="s" style="left:670px;top:71px" width="6" height="4"><use href="#cv"/></svg><div class="vs" style="left:687px;top:62px;height:20px"></div>
<i style="left:695px;top:61px;font-size:10px;color:#2f6db5;line-height:11px">A</i><i style="left:695px;top:71px;font-size:10px;color:#7a3ea0;line-height:11px">Z</i><svg class="s" style="left:704px;top:62px" width="12" height="18"><path d="M6 0v15M2 11l4 5 4-5" stroke="#555" fill="none"/></svg><div class="vs" style="left:721px;top:62px;height:20px"></div>
<svg class="s" style="left:729px;top:65px" width="11" height="16"><use href="#ret"/></svg>
<div class="on" style="left:469px;top:92px;width:21px;height:23px"></div><svg class="s" style="left:472px;top:96px" width="15" height="16"><use href="#al"/></svg><svg class="s" style="left:496px;top:96px" width="15" height="16"><use href="#ac"/></svg><svg class="s" style="left:520px;top:96px" width="15" height="16"><use href="#ar"/></svg><svg class="s" style="left:544px;top:96px" width="15" height="16"><use href="#aj"/></svg><svg class="s" style="left:567px;top:94px" width="15" height="20"><use href="#ad"/></svg><div class="vs" style="left:590px;top:93px;height:20px"></div>
<svg class="s" style="left:600px;top:94px" width="15" height="20"><use href="#ls"/></svg><svg class="s" style="left:619px;top:102px" width="6" height="4"><use href="#cv"/></svg><div class="vs" style="left:635px;top:93px;height:20px"></div>
<svg class="s" style="left:643px;top:94px" width="17" height="20"><use href="#shd"/></svg><svg class="s" style="left:665px;top:102px" width="6" height="4"><use href="#cv"/></svg><svg class="s" style="left:682px;top:95px" width="14" height="18"><use href="#bd"/></svg><svg class="s" style="left:704px;top:102px" width="6" height="4"><use href="#cv"/></svg>
<i class="grp" style="left:585px">段落</i><svg class="s" style="left:740px;top:132px" width="9" height="7"><use href="#dl"/></svg>
<div class="gal"></div><div class="gb"></div><svg class="s" style="left:1636px;top:80px" width="8" height="5"><use href="#cv"/></svg>
<div class="g" style="left:769px;width:60px">AaBbCcDc</div>
<div class="g" style="left:842px;width:59px">AaBbCcDc</div>
<div class="g" style="left:913px;width:60px;font-weight:bold">AaBbCcI</div>
<div class="g" style="left:985px;width:59px">AaBbCcDc</div>
<div class="g" style="left:1059px;width:58px;font-weight:bold;font-style:italic">AaBbCcI</div>
<div class="g" style="left:1130px;width:58px;font-size:19px;top:64px;height:28px;line-height:28px">AaBbC</div>
<div class="g" style="left:1202px;width:58px;font-size:18px;font-weight:bold;top:64px;height:28px;line-height:28px">AaBbCc</div>
<div class="g" style="left:1274px;width:58px;font-size:16px;top:64px;height:28px;line-height:28px;color:#1f3a66">AaBbCc</div>
<div class="g" style="left:1346px;width:58px">AaBbCcDc</div>
<div class="g" style="left:1418px;width:58px">AaBbCcDc</div>
<div class="g" style="left:1489px;width:59px">AaBbCcDc</div>
<div class="g" style="left:1562px;width:59px;font:bold 23px/28px 'Liberation Sans',sans-serif;top:64px;height:28px">AaBb</div>
<i class="l" style="left:781px">↲ 正文</i><i class="l" style="left:839px">↲ Table P...</i><i class="l" style="left:918px">↲ TOC 1</i><i class="l" style="left:991px">↲ TOC 2</i><i class="l" style="left:1064px">↲ TOC 3</i><i class="l" style="left:1136px">↲ 标题 7</i><i class="l" style="left:1208px">↲ 标题 8</i><i class="l" style="left:1280px">↲ 标题 9</i><i class="l" style="left:1345px">↲ 列表段落</i><i class="l" style="left:1423px">↲ 无间隔</i><i class="l" style="left:1489px">↲ 正文文本</i><i class="l" style="left:1569px">↲ 标题 1</i>
<i class="grp" style="left:1187px">样式</i><svg class="s" style="left:1652px;top:132px" width="8" height="7"><use href="#dl"/></svg>
<svg class="s" style="left:1675px;top:57px" width="15" height="18"><use href="#zoom"/></svg><i style="left:1693px;top:57px;color:#333">查找</i><svg class="s" style="left:1732px;top:62px" width="6" height="4"><use href="#cv"/></svg>
<i style="left:1674px;top:79px;font-size:9px;line-height:9px;color:#7a3ea0">ab</i><i style="left:1675px;top:87px;font-size:9px;line-height:9px;color:#2f6db5">ac</i><i style="left:1693px;top:80px;color:#333">替换</i>
<svg class="s" style="left:1678px;top:102px" width="10" height="17"><use href="#ptr"/></svg><i style="left:1693px;top:103px;color:#333">选择</i><svg class="s" style="left:1722px;top:109px" width="6" height="4"><use href="#cv"/></svg>
<i class="grp" style="left:1696px">编辑</i>
<div class="a" style="left:1779px;top:65px;width:11px;height:12px;border-radius:50%;background:#f58a1f"></div><i style="left:1779px;top:90px;color:#333">加</i><i style="left:1773px;top:105px;color:#333">载项</i><i class="grp" style="left:1765px">加载项</i>

<!-- rulers -->
<div class="a" style="left:344px;top:146px;width:28px;height:27px;background:#d4d4d4"></div><div class="a" style="left:347px;top:147px;width:20px;height:21px;background:#fff"></div><svg class="s" style="left:352px;top:155px" width="6" height="6"><path d="M.5 0v5.500H6" fill="none" stroke="#333" stroke-width="1.500"/></svg>
<div class="rg" style="left:601px;width:129px"></div><div class="rw" style="left:730px;width:846px"></div><div class="rg" style="left:1576px;width:88px"></div>
<div class="rt" style="left:615px;width:1049px;background:repeating-linear-gradient(90deg,transparent 0 9px,#555 9px 10px,transparent 10px 28px,#555 28px 29px,transparent 29px 38.100px)"></div>
<div class="rl"><i style="left:615px">6</i><i style="left:654px">4</i><i style="left:692px">2</i><i style="left:768px">2</i><i style="left:806px">4</i><i style="left:845px">6</i><i style="left:883px">8</i><i style="left:922px">10</i><i style="left:960px">12</i><i style="left:997px">14</i><i style="left:1036px">16</i><i style="left:1074px">18</i><i style="left:1112px">20</i><i style="left:1150px">22</i><i style="left:1188px">24</i><i style="left:1227px">26</i><i style="left:1265px">28</i><i style="left:1303px">30</i><i style="left:1341px">32</i><i style="left:1379px">34</i><i style="left:1417px">36</i><i style="left:1456px">38</i><i style="left:1494px">40</i><i style="left:1532px">42</i><i style="left:1570px">44</i><i style="left:1608px">46</i><i style="left:1646px">48</i></div>
<svg class="s" style="left:1007px;top:147px" width="11" height="28"><path d="M.5.5h10V5L5.500 11 .5 5zM.5 21.500V17L5.500 12l5 5v4.500zM.5 21.500h10v6H.5z" fill="#fff" stroke="#888"/></svg>
<svg class="s" style="left:1572px;top:159px" width="11" height="10"><path d="M5.500.5l5 5v4H.5v-4z" fill="#fff" stroke="#888"/></svg>

<!-- nav -->
<div class="a" style="left:342px;top:146px;width:2px;height:855px;background:#c6c6c6"></div>
<i style="left:7px;top:160px;font-size:21px;line-height:26px;color:#333">导航</i>
<svg class="s" style="left:270px;top:164px" width="14" height="8"><use href="#nv"/></svg><svg class="s" style="left:314px;top:163px" width="11" height="11"><use href="#x"/></svg>
<div class="box" style="left:7px;top:201px;width:317px;height:26px;border-color:#b5b5b5"></div><i style="left:14px;top:205px;color:#666">在文档中搜索</i>
<svg class="s" style="left:297px;top:206px" width="15" height="15"><use href="#zoom"/></svg><svg class="s" style="left:314px;top:212px" width="6" height="4"><use href="#cv"/></svg>
<i style="left:8px;top:244px;color:#2b579a;font-weight:bold">标题</i><i style="left:57px;top:244px;color:#555">页面</i><i style="left:106px;top:244px;color:#555">结果</i><div class="a" style="left:7px;top:267px;width:26px;height:3px;background:#2b579a"></div>
<div class="a" style="left:87px;top:883px;width:224px;height:20px;background:#c3d5f1"></div>
<div class="n">
<i style="left:93px;top:275px">1. 评标方法</i>
<b class="tf" style="left:76px;top:301px"></b><i style="left:93px;top:296px">2. 评审标准</i>
<i style="left:108px;top:317px">2.1 初步评审标准</i><i style="left:108px;top:338px">2.2 分值构成与评分标准</i>
<b class="tf" style="left:76px;top:364px"></b><i style="left:93px;top:359px">3. 评标程序</i>
<i style="left:108px;top:380px">3.1 初步评审</i><i style="left:93px;top:401px">3.2 详细评审</i><i style="left:93px;top:422px">3.3 投标文件的澄清</i>
<b class="tf" style="left:76px;top:448px"></b><i style="left:93px;top:443px">3.4 评标结果</i>
<b class="tf" style="left:124px;top:469px"></b><i style="left:140px;top:464px">项目名称：精细化工及原料工...</i>
<i style="left:156px;top:485px">附录：北方华锦联合石化...</i><i style="left:156px;top:506px">附件 3：承包商环境保护管...</i><i style="left:156px;top:527px">附件 4：履约保证金格式</i><i style="left:156px;top:548px">附件 5：保密承诺书</i>
<b class="tf" style="left:60px;top:574px"></b><i style="left:76px;top:569px">保密承诺书</i>
<i style="left:156px;top:590px">附件 6：承诺书</i><i style="left:156px;top:610px">附件 7: 廉洁合作承诺书</i><i style="left:156px;top:631px">附件 8：舆情管理条款</i><i style="left:156px;top:652px">附件 9：文档管理要求</i><i style="left:156px;top:673px">附件 10：合规承诺书</i>
<b class="tf" style="left:44px;top:699px"></b><i style="left:60px;top:694px">第五章 发包人要求</i>
<i style="left:92px;top:715px">一、服务内容</i><i style="left:92px;top:736px">二、其他内容</i><i style="left:92px;top:757px">二、授权委托书（适用于有委托代理人...</i><i style="left:92px;top:778px">三、联合体协议书（如适用）</i><i style="left:92px;top:799px">四、投标保证金</i><i style="left:92px;top:820px">五、投标报价表（分项报价表）</i><i style="left:92px;top:841px">六、资格审查资料</i><i style="left:92px;top:862px">承诺书-1</i>
<b class="tf" style="left:76px;top:888px"></b><i style="left:92px;top:883px">七、其他资料</i>
<i style="left:115px;top:904px">（四）商务和技术偏差表</i><i style="left:115px;top:925px">（五）评标说明文件</i>
<b class="tf" style="left:92px;top:951px"></b><i style="left:115px;top:946px">（六）投标方认为有必要补充的其...</i>
<i style="left:140px;top:967px">评标索引</i>
</div>

<!-- pages -->
<div class="a" style="left:603px;top:175px;width:1061px;height:24px;background:#fff;border:1px solid #c6c6c6;border-top:0"></div>
<div class="a" style="left:603px;top:213px;width:1061px;height:791px;background:#fff;border:1px solid #c6c6c6;border-bottom:0"></div>
<div class="a" style="left:764px;top:301px;width:787px;height:1px;background:#888"></div>
<svg class="s" style="left:714px;top:302px" width="31" height="30"><path d="M30.500 0v29.500H0" fill="none" stroke="#aaa"/></svg>
<svg class="s" style="left:1573px;top:302px" width="31" height="30"><path d="M.5 0v29.500H31" fill="none" stroke="#aaa"/></svg>
<i style="left:815px;top:343px;font:26px/32px 'Liberation Serif','Noto Serif CJK SC',serif;color:#000"><u style="text-underline-offset:1px">（二）师资及管理人员</u><s>↵</s></i>
<i style="left:745px;top:376px;font-size:9px;color:#999">↵</i>
<div class="a" style="left:754px;top:390px;width:745px;height:614px;overflow:hidden">
<table class="t2" style="width:741px"><colgroup><col style="width:50px"><col style="width:108px"><col style="width:106px"><col style="width:95px"><col style="width:97px"><col style="width:100px"><col style="width:97px"><col style="width:88px"></colgroup>
<tr class="h" style="height:71px"><td><u>序</u><br><u>号</u><s>↵</s><td><u>姓名</u><s>↵</s><td><u>职称</u><s>↵</s><td><u>职称专</u><br><u>业</u><s>↵</s><td><u>注册资格</u><br><u>证书名称</u><s>↵</s><td><u>注册专业</u><s>↵</s><td><u>身份证号</u><s>↵</s><td><u>社保号</u><s>↵</s>
<tr style="height:47px"><td><s>↵</s><td><s>↵</s><td><s>↵</s><td><s>↵</s><td><s>↵</s><td><s>↵</s><td><s>↵</s><td><s>↵</s>
<tr style="height:46px"><td><s>↵</s><td><s>↵</s><td><s>↵</s><td><s>↵</s><td><s>↵</s><td><s>↵</s><td><s>↵</s><td><s>↵</s>
<tr style="height:47px"><td><s>↵</s><td><s>↵</s><td><s>↵</s><td><s>↵</s><td><s>↵</s><td><s>↵</s><td><s>↵</s><td><s>↵</s>
<tr style="height:46px"><td><s>↵</s><td><s>↵</s><td><s>↵</s><td><s>↵</s><td><s>↵</s><td><s>↵</s><td><s>↵</s><td><s>↵</s>
<tr style="height:47px"><td><s>↵</s><td><s>↵</s><td><s>↵</s><td><s>↵</s><td><s>↵</s><td><s>↵</s><td><s>↵</s><td><s>↵</s>
<tr style="height:46px"><td><s>↵</s><td><s>↵</s><td><s>↵</s><td><s>↵</s><td><s>↵</s><td><s>↵</s><td><s>↵</s><td><s>↵</s>
<tr style="height:47px"><td><s>↵</s><td><s>↵</s><td><s>↵</s><td><s>↵</s><td><s>↵</s><td><s>↵</s><td><s>↵</s><td><s>↵</s>
<tr style="height:46px"><td><s>↵</s><td><s>↵</s><td><s>↵</s><td><s>↵</s><td><s>↵</s><td><s>↵</s><td><s>↵</s><td><s>↵</s>
<tr style="height:47px"><td><s>↵</s><td><s>↵</s><td><s>↵</s><td><s>↵</s><td><s>↵</s><td><s>↵</s><td><s>↵</s><td><s>↵</s>
<tr style="height:46px"><td><s>↵</s><td><s>↵</s><td><s>↵</s><td><s>↵</s><td><s>↵</s><td><s>↵</s><td><s>↵</s><td><s>↵</s>
<tr style="height:46px"><td><s>↵</s><td><s>↵</s><td><s>↵</s><td><s>↵</s><td><s>↵</s><td><s>↵</s><td><s>↵</s><td><s>↵</s>
<tr style="height:47px"><td><s>↵</s><td><s>↵</s><td><s>↵</s><td><s>↵</s><td><s>↵</s><td><s>↵</s><td><s>↵</s><td><s>↵</s>
</table></div>
<div class="red" style="left:686px;top:342px;width:781px;height:197px;border-width:3px 4px"></div>

<!-- status -->
<div class="st"><i style="left:5px">第 114 页，共 120 页</i><i style="left:141px">48625 个字</i><svg class="s" style="left:224px;top:1009px" width="15" height="13"><path d="M.5.500H7v11H.5zM7 .5h3M7 11.500h3" fill="none" stroke="#555"/></svg><i style="left:232px;top:1008px;font-size:9px">x</i><i style="left:256px">简体中文(中国大陆)</i><i style="left:378px">修订: 关闭</i><i style="left:452px;color:#555">♿</i><i style="left:471px;color:#333">辅助功能: 不可用</i>
<svg class="s" style="left:1756px;top:1008px" width="14" height="15"><path d="M.5.500h13v14H.5zM4 3h6M4 6h6M4 9h6M4 12h6" fill="none" stroke="#666"/></svg>
<div class="a" style="left:1784px;top:1005px;width:46px;height:21px;background:#c6c6c6"></div>
<svg class="s" style="left:1797px;top:1008px" width="14" height="15"><path d="M.5.500h13v14H.5zM3 4h8M3 7h8M3 10h8" fill="none" stroke="#555"/></svg></div>
</div>

<!-- side marks at far right -->
<div class="a" style="left:3708px;top:657px;width:16px;height:2px;background:#e03030"></div>
<div class="a" style="left:3738px;top:657px;width:5px;height:3px;background:#e03030"></div>
<div class="a" style="left:3722px;top:990px;width:40px;height:42px;border-radius:50%;background:#d3ecdc;z-index:6"></div>
<div class="a" style="left:3726px;top:994px;width:32px;height:34px;border-radius:50%;background:#7fd3a0;z-index:6"></div>

<!-- taskbar icons -->
<i style="left:1858px;top:1029px;color:#fff;font-size:12.5px">17:39</i>
<div class="a" style="left:0;top:1026px;width:1915px;height:21px;overflow:hidden">
<svg class="k" style="left:9px;top:12px" width="16" height="16"><use href="#wn"/></svg>
<div class="k" style="left:58px;top:10px;width:18px;height:18px;border:3px solid #fff;border-radius:50%"></div>
<div class="k" style="left:107px;top:6px;width:18px;height:20px;background:#8fa6b8"></div><div class="k" style="left:110px;top:14px;width:12px;height:3px;background:#dfe8ee"></div>
<div class="k" style="left:153px;top:8px;width:24px;height:24px;border-radius:50%;background:conic-gradient(#f33,#fc3,#3c6,#3cf,#63f,#f3c,#f33)"></div><div class="k" style="left:161px;top:16px;width:8px;height:8px;border-radius:50%;background:#fff"></div>
<div class="k" style="left:202px;top:8px;width:23px;height:20px;background:#e89a2a"></div><div class="k" style="left:209px;top:12px;width:10px;height:10px;border-radius:50%;background:#2b6cb0;border:2px solid #fff"></div>
<div class="k" style="left:252px;top:14px;width:14px;height:14px;border-radius:50%;background:#0d5cb0"></div><div class="k" style="left:266px;top:8px;width:6px;height:6px;border-radius:50%;background:#4aa3df"></div>
<div class="k" style="left:300px;top:8px;width:24px;height:20px;border-radius:5px;background:#fff"></div><div class="k" style="left:307px;top:14px;width:13px;height:8px;background:#1e88e5"></div>
<div class="k" style="left:349px;top:8px;width:24px;height:20px;border-radius:5px;background:#1e90e8"></div><div class="k" style="left:355px;top:12px;width:12px;height:12px;border:3px solid #fff;border-radius:50%"></div>
<div class="k" style="left:400px;top:8px;width:21px;height:21px;border:4px solid #2f7a3a;border-radius:50%"></div>
<div class="k" style="left:449px;top:8px;width:22px;height:22px;border-radius:50%;background:#2b6cb0"></div><div class="k" style="left:456px;top:12px;width:8px;height:8px;background:#fff"></div>
<div class="k" style="left:503px;top:8px;width:10px;height:20px;background:#e8e8e8"></div>
<div class="k" style="left:545px;top:8px;width:21px;height:20px;border-radius:50%;background:#2ec46a"></div>
<div class="k" style="left:595px;top:7px;width:24px;height:24px;border:4px solid #5a9e3a;border-radius:50%"></div>
<div class="k" style="left:643px;top:8px;width:24px;height:20px;background:#001e36;border:2px solid #31a8ff;border-radius:3px"></div><i style="left:648px;top:9px;color:#31a8ff;font-size:11px;font-weight:bold">Ps</i>
<div class="k" style="left:680px;top:0;width:47px;height:21px;background:#4f5c63"></div><div class="k" style="left:691px;top:9px;width:9px;height:12px;background:#e07c20"></div><div class="k" style="left:702px;top:7px;width:5px;height:14px;background:#2d7a3a;transform:rotate(20deg)"></div>
<div class="k" style="left:742px;top:8px;width:23px;height:20px;background:#fff;border-radius:5px"></div><div class="k" style="left:749px;top:9px;width:9px;height:11px;background:#111;border-radius:50%"></div><div class="k" style="left:748px;top:17px;width:11px;height:4px;background:#e02020"></div>
<i style="left:790px;top:9px;color:#3a7fc4;font-size:12px">xin</i>
<div class="k" style="left:827px;top:0;width:48px;height:21px;background:#ab6a35"></div><div class="k" style="left:841px;top:9px;width:20px;height:20px;border:3px solid #2b8fe0;border-radius:50%"></div>
<div class="k" style="left:889px;top:8px;width:22px;height:20px;background:#2a0f0f;border:2px solid #e02020"></div>
<div class="k" style="left:938px;top:8px;width:22px;height:24px;border:4px solid #1e90ff;border-radius:50%"></div>
<div class="k" style="left:986px;top:9px;width:23px;height:18px;background:#1e8e4a"></div><div class="k" style="left:998px;top:9px;width:11px;height:18px;background:#2ab06a"></div>
<div class="k" style="left:1035px;top:9px;width:24px;height:18px;background:#2b7cd3"></div><div class="k" style="left:1047px;top:9px;width:12px;height:18px;background:#5aa5ee"></div>
<div class="k" style="left:1086px;top:7px;width:19px;height:20px;background:#a8c8d8;transform:skewX(-10deg)"></div>
<div class="k" style="left:1134px;top:9px;width:22px;height:18px;background:#f3c74e"></div><div class="k" style="left:1134px;top:7px;width:10px;height:4px;background:#e29a1e"></div>
</div>
<div class="a" style="left:1920px;top:1026px;width:1830px;height:21px;overflow:hidden">
<svg class="k" style="left:9px;top:12px" width="16" height="16"><use href="#wn"/></svg>
<div class="k" style="left:58px;top:10px;width:18px;height:18px;border:3px solid #fff;border-radius:50%"></div>
<div class="k" style="left:107px;top:6px;width:18px;height:20px;background:#8fa6b8"></div><div class="k" style="left:110px;top:14px;width:12px;height:3px;background:#dfe8ee"></div>
<div class="k" style="left:153px;top:8px;width:24px;height:24px;border-radius:50%;background:conic-gradient(#f33,#fc3,#3c6,#3cf,#63f,#f3c,#f33)"></div><div class="k" style="left:161px;top:16px;width:8px;height:8px;border-radius:50%;background:#fff"></div>
<div class="k" style="left:202px;top:8px;width:23px;height:20px;background:#e89a2a"></div><div class="k" style="left:209px;top:12px;width:10px;height:10px;border-radius:50%;background:#2b6cb0;border:2px solid #fff"></div>
<div class="k" style="left:252px;top:14px;width:14px;height:14px;border-radius:50%;background:#0d5cb0"></div><div class="k" style="left:266px;top:8px;width:6px;height:6px;border-radius:50%;background:#4aa3df"></div>
<div class="k" style="left:300px;top:8px;width:24px;height:20px;border-radius:5px;background:#fff"></div><div class="k" style="left:307px;top:14px;width:13px;height:8px;background:#1e88e5"></div>
<div class="k" style="left:349px;top:8px;width:24px;height:20px;border-radius:5px;background:#1e90e8"></div><div class="k" style="left:355px;top:12px;width:12px;height:12px;border:3px solid #fff;border-radius:50%"></div>
<div class="k" style="left:400px;top:8px;width:21px;height:21px;border:4px solid #2f7a3a;border-radius:50%"></div>
<div class="k" style="left:449px;top:8px;width:22px;height:22px;border-radius:50%;background:#2b6cb0"></div><div class="k" style="left:456px;top:12px;width:8px;height:8px;background:#fff"></div>
<div class="k" style="left:503px;top:8px;width:10px;height:20px;background:#e8e8e8"></div>
<div class="k" style="left:545px;top:8px;width:21px;height:20px;border-radius:50%;background:#2ec46a"></div>
<div class="k" style="left:595px;top:7px;width:24px;height:24px;border:4px solid #5a9e3a;border-radius:50%"></div>
<div class="k" style="left:643px;top:8px;width:24px;height:20px;background:#001e36;border:2px solid #31a8ff;border-radius:3px"></div><i style="left:648px;top:9px;color:#31a8ff;font-size:11px;font-weight:bold">Ps</i>
<div class="k" style="left:680px;top:0;width:47px;height:21px;background:#4f5c63"></div><div class="k" style="left:691px;top:9px;width:9px;height:12px;background:#e07c20"></div><div class="k" style="left:702px;top:7px;width:5px;height:14px;background:#2d7a3a;transform:rotate(20deg)"></div>
<div class="k" style="left:742px;top:8px;width:23px;height:20px;background:#fff;border-radius:5px"></div><div class="k" style="left:749px;top:9px;width:9px;height:11px;background:#111;border-radius:50%"></div><div class="k" style="left:748px;top:17px;width:11px;height:4px;background:#e02020"></div>
<i style="left:790px;top:9px;color:#3a7fc4;font-size:12px">xin</i>
<div class="k" style="left:827px;top:0;width:48px;height:21px;background:#ab6a35"></div><div class="k" style="left:841px;top:9px;width:20px;height:20px;border:3px solid #2b8fe0;border-radius:50%"></div>
<div class="k" style="left:889px;top:8px;width:22px;height:20px;background:#2a0f0f;border:2px solid #e02020"></div>
<div class="k" style="left:938px;top:8px;width:22px;height:24px;border:4px solid #1e90ff;border-radius:50%"></div>
<div class="k" style="left:986px;top:9px;width:23px;height:18px;background:#1e8e4a"></div><div class="k" style="left:998px;top:9px;width:11px;height:18px;background:#2ab06a"></div>
<div class="k" style="left:1035px;top:9px;width:24px;height:18px;background:#2b7cd3"></div><div class="k" style="left:1047px;top:9px;width:12px;height:18px;background:#5aa5ee"></div>
<div class="k" style="left:1086px;top:7px;width:19px;height:20px;background:#a8c8d8;transform:skewX(-10deg)"></div>
<div class="k" style="left:1134px;top:9px;width:22px;height:18px;background:#f3c74e"></div><div class="k" style="left:1134px;top:7px;width:10px;height:4px;background:#e29a1e"></div>
</div>
</body></html>
